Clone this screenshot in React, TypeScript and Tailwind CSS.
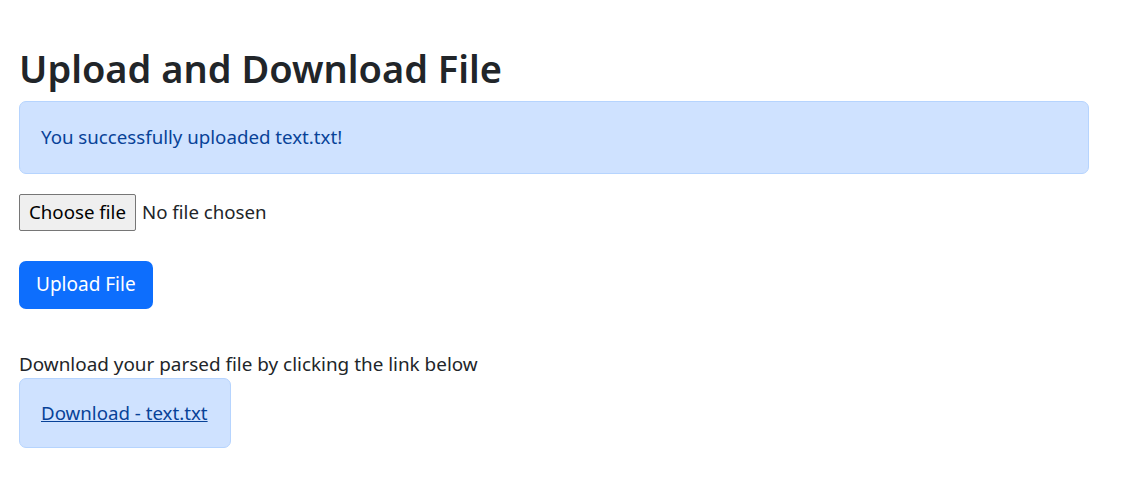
import React from 'react';

const App: React.FC = () => {
  return (
    <div className="min-h-screen bg-white text-[#212529] font-['Segoe_UI','Noto_Sans',sans-serif] text-[18.7px] leading-[1.5]">
      <div className="w-[1070px] ml-[19px] pt-[45px]">
        <h1 className="text-[38px] font-semibold leading-[1.23] mb-[9px]">Upload and Download File</h1>

        {/* Status message */}
        <div className="h-[73px] flex items-center px-[21px] bg-[#cfe2ff] border border-[#b6d4fe] rounded-[7px] text-[#084298]">
          You successfully uploaded text.txt!
        </div>

        <div className="mt-[20px] flex items-center">
          <button className="h-[37px] px-[9px] bg-[#efefef] border border-[#767676] rounded-[2px] text-black">
            Choose file
          </button>
          <span className="ml-[6px]">No file chosen</span>
        </div>

        <button className="mt-[30px] h-[48px] px-[17px] bg-[#0d6efd] text-white text-[19px] rounded-[7px]">
          Upload File
        </button>

        <p className="mt-[42px] leading-[1.4] text-[18.9px]">Download your parsed file by clicking the link below</p>
        <div className="mt-[1px] w-[212px] h-[70px] flex items-center px-[21px] bg-[#cfe2ff] border border-[#b6d4fe] rounded-[7px]">
          <a href="#" className="text-[#084298] underline">Download - text.txt</a>
        </div>
      </div>
    </div>
  );
};

export default App;
